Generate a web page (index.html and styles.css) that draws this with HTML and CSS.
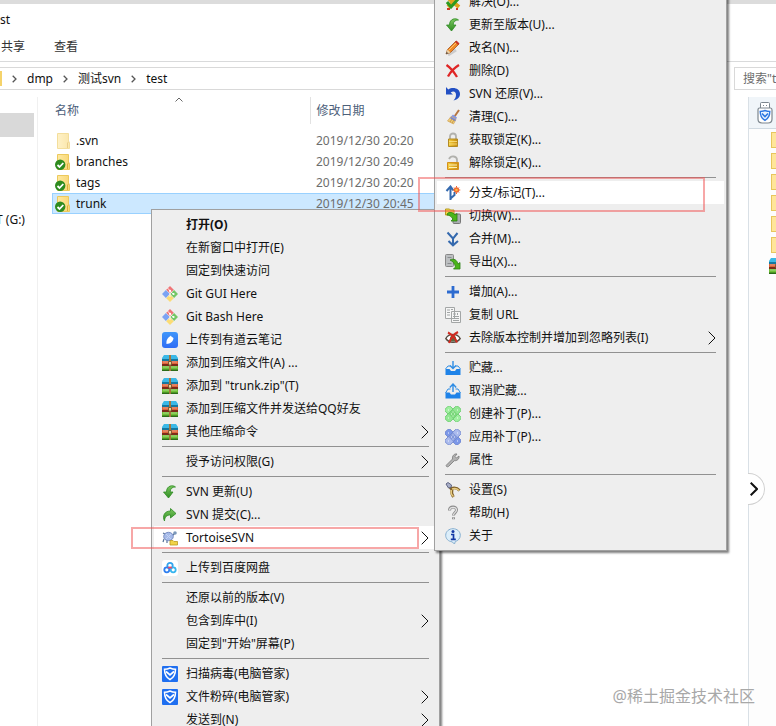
FILE: index.html
```
<!DOCTYPE html>
<html lang="zh-CN">
  <head>
    <meta charset="UTF-8" />
    <meta name="viewport" content="width=device-width, initial-scale=1.0" />
    <title>test</title>
    <link rel="stylesheet" href="styles.css">
  </head>
  <body>
    <svg class="sprite" aria-hidden="true">
      <defs>
        <linearGradient id="gFolder" x1="0" x2="1" y1="0" y2="0">
          <stop offset="0" stop-color="#ffe9a2" />
          <stop offset="1" stop-color="#f8d775" />
        </linearGradient>
        <linearGradient id="gGreen" x1="0" x2="0" y1="0" y2="1">
          <stop offset="0" stop-color="#7cc860" />
          <stop offset="1" stop-color="#2f8d22" />
        </linearGradient>
        <linearGradient id="gGold" x1="0" x2="1" y1="0" y2="0">
          <stop offset="0" stop-color="#f6cf3c" />
          <stop offset="1" stop-color="#c98d10" />
        </linearGradient>
        <linearGradient id="gNote" x1="0" x2="0" y1="0" y2="1">
          <stop offset="0" stop-color="#3f96fa" />
          <stop offset="1" stop-color="#2f6df5" />
        </linearGradient>
      </defs>
      <symbol id="folder" viewBox="0 0 16 16">
        <path d="M2.500.5h11v8l1 1v6h-12z" fill="url(#gFolder)" stroke="#ecc95c" />
        <path d="M12.500 15v-5l1.500-1.500" fill="none" stroke="#dcae3d" />
      </symbol>
      <symbol id="folderOk" viewBox="0 0 16 16">
        <path d="M2.500.5h11v8l1 1v6h-12z" fill="url(#gFolder)" stroke="#ecc95c" />
        <path d="M12.500 15v-5l1.500-1.500" fill="none" stroke="#dcae3d" />
        <circle cx="5.200" cy="10.800" r="5.200" fill="#2e8b1f" />
        <path d="M2.500 11l2 2 3.800-4" fill="none" stroke="#fff" stroke-width="1.800" />
      </symbol>
      <symbol id="git" viewBox="0 0 16 16">
        <path d="M8 0l3.800 3.800L8 7.600 4.200 3.800z" fill="#ef7477" />
        <path d="M3.900 4.100L7.800 8l-3.900 3.900L0 8z" fill="#7ba3f3" />
        <path d="M12.100 4.100L16 8l-3.900 3.900L8.200 8z" fill="#74c765" />
        <path d="M8 8.400l3.800 3.800L8 16l-3.800-3.800z" fill="#fbdc75" />
        <path d="M5.500 2l5.500 6M8 5v6" stroke="#fff" stroke-width=".8" />
        <circle cx="8" cy="4.800" r="1.100" fill="#fff" />
        <circle cx="11.500" cy="8" r="1.100" fill="#fff" />
      </symbol>
      <symbol id="note" viewBox="0 0 16 16">
        <rect width="16" height="16" rx="3" fill="url(#gNote)" />
        <path d="M4.500 12c-.5-4 1-6 4.500-8.500 0 1 1 1.500 2.500 2.500C11 10 8.500 11.500 4.500 12z" fill="#fff" />
      </symbol>
      <symbol id="zip" viewBox="0 0 16 16">
        <path d="M2 0h12l2 3v2H0V3z" fill="#3bb8e6" />
        <path d="M0 4h16v2H0z" fill="#16789f" />
        <path d="M0 6h16v4H0z" fill="#de6338" />
        <path d="M0 9h16v2H0z" fill="#7c2b19" />
        <path d="M0 11h16v4H0z" fill="#6fc037" />
        <path d="M0 14.500h16V16H0z" fill="#2d6c18" />
        <path d="M1 7h14M1 12h14" stroke="#fff" stroke-opacity=".4" />
        <path d="M7 0h2v16H7z" fill="#a5763d" />
        <path d="M6.500 6.500h3V10h-3z" fill="#ead49b" stroke="#6c4420" stroke-width=".8" />
      </symbol>
      <symbol id="update" viewBox="0 0 16 16">
        <path d="M13.500 3C11 .8 4.500 1.200 4.500 8H1.500L6.500 14l4.500-6H8.200c0-3.500 2-5 5.300-5z" fill="url(#gGreen)" stroke="#2c8a22" stroke-width=".8" />
      </symbol>
      <symbol id="commit" viewBox="0 0 16 16">
        <path d="M2.500 14C0 9 2.500 4 8.500 4V1.500L14 6.500 8.500 11V8C5 8 2.800 9.500 2.500 14z" fill="url(#gGreen)" stroke="#2c8a22" stroke-width=".8" />
      </symbol>
      <symbol id="tortoise" viewBox="0 0 16 16">
        <path d="M1 3l4 2M2 9l-1 3M5 10v3M10 6l3-3" stroke="#526f95" stroke-width="1.200" />
        <ellipse cx="6.500" cy="6.500" rx="4.800" ry="4.200" fill="#a5bae8" stroke="#7c8fc4" />
        <path d="M4 4l5 5M9 4L4 9" stroke="#c4d2f5" />
        <circle cx="13" cy="3" r="1.800" fill="#7c98ba" />
        <path d="M8 10.500h3l1 1h3.500V15H8z" fill="#f1d348" stroke="#bb9920" stroke-width=".8" />
      </symbol>
      <symbol id="baidu" viewBox="0 0 16 16">
        <rect width="16" height="16" rx="3" fill="#fff" />
        <g fill="none" stroke-width="1.800">
          <circle cx="8" cy="5.500" r="2.700" stroke="#33a4ee" />
          <circle cx="4.800" cy="9.800" r="2.500" stroke="#2f7ff0" />
          <circle cx="11.200" cy="9.800" r="2.500" stroke="#37b5ef" />
        </g>
        <path d="M6.300 8.200c.8-1 2.600-1 3.400 0" fill="none" stroke="#ee4a66" stroke-width="1.800" />
      </symbol>
      <symbol id="guard" viewBox="0 0 16 16">
        <rect width="16" height="16" rx="1" fill="#1f6ff0" />
        <path d="M8 2c2 1 3.500 1.300 5.500 1.300 0 5-1.500 8.200-5.500 10.400C4 11.500 2.500 8.300 2.500 3.300 4.500 3.300 6 3 8 2z" fill="none" stroke="#fff" stroke-width="1.500" />
        <path d="M4 5.500l4 3.300 4-3.300" fill="none" stroke="#fff" stroke-width="1.700" />
      </symbol>
      <symbol id="resolve" viewBox="0 0 16 16">
        <path d="M2 3l12 10M13 3L3 13" stroke="#e0a41c" stroke-width="4" />
        <path d="M2 8l4 5 8-9" fill="none" stroke="#2c9a20" stroke-width="3" />
        <path d="M2 15h3M11 15h2" stroke="#d13a22" stroke-width="2" />
      </symbol>
      <symbol id="rename" viewBox="0 0 16 16">
        <path d="M3 15l8-5" stroke="#aaa" stroke-opacity=".5" stroke-width="3" />
        <path d="M1 14l1.500-4.500L11 1l3 3-8.500 8.500z" fill="#ef8a26" stroke="#a3541f" stroke-width=".8" />
        <path d="M4 10l8-8" stroke="#ffc36b" />
        <path d="M1 14l1.500-4.500L5.500 12.500z" fill="#ead0a4" />
        <path d="M1 14l.8-2 1.200 1.200z" fill="#222" />
        <path d="M10 2l1.500-1.500 3 3L13 5z" fill="#c63429" />
      </symbol>
      <symbol id="delete" viewBox="0 0 16 16">
        <path d="M1.500 2C6 5 9 9 12 14M14 2C9 5 6 8 3 13.500" fill="none" stroke="#df2626" stroke-width="2.300" />
      </symbol>
      <symbol id="revert" viewBox="0 0 16 16">
        <path d="M1 1v7.500h7L5.600 6.400C9 4.500 11 6 11 9c0 2-1 4-2.500 5.500C13 13.500 15 11 15 8 15 2.500 8 .5 3.300 3.500z" fill="#2350c4" />
      </symbol>
      <symbol id="clean" viewBox="0 0 16 16">
        <path d="M14 1L9.500 7.500" stroke="#b77742" stroke-width="2" />
        <path d="M8 5.500l4 3-1 2-5-3z" fill="#8999e0" />
        <path d="M6 7.500l5 3-2.500 4.500-6-3z" fill="#f0cb79" stroke="#c99a48" stroke-width=".6" />
        <path d="M5.500 8.500l5 3" stroke="#7384d5" stroke-width="1.500" />
        <path d="M5 13l2-3M7 14l2-3" stroke="#b48635" stroke-width=".7" />
      </symbol>
      <symbol id="lock" viewBox="0 0 16 16">
        <path d="M5 8V4.500C5 .5 11 .5 11 4.500V8" fill="none" stroke="#b1b1ad" stroke-width="1.800" />
        <path d="M3.500 7h9v7.500h-9z" fill="url(#gGold)" stroke="#b28a24" />
        <path d="M4 9.500h8M4 12h8" stroke="#fbe48a" stroke-width=".8" />
      </symbol>
      <symbol id="unlock" viewBox="0 0 16 16">
        <path d="M4 4C6 0 12 1 12 5v3" fill="none" stroke="#b1b1ad" stroke-width="1.800" />
        <path d="M2.500 7.500h11v7h-11z" fill="url(#gGold)" stroke="#d5911d" />
        <path d="M4 10h8M4 12.500h8" stroke="#fff0b8" stroke-width="1.200" />
      </symbol>
      <symbol id="branch" viewBox="0 0 16 16">
        <path d="M5.500 15V2.500M1.500 6l4-4.500 3 4M5.500 13.500L9.500 10V7" fill="none" stroke="#3469ae" stroke-width="2" />
        <circle cx="11.500" cy="5" r="2" fill="#ffbc42" stroke="#ef6630" stroke-width="1.300" />
        <path d="M11.500 1v1.500M11.500 7.500V9M7.800 5h1.500M13.800 5h1.500M9 2.500l1 1M14 2.500l-1 1M14 7.500l-1-1" stroke="#ef6630" />
      </symbol>
      <symbol id="switch" viewBox="0 0 16 16">
        <rect x="8" y="6" width="7.500" height="9.500" rx="1" fill="#a9adb0" stroke="#777" />
        <path d="M.5 1h4l1 1H9v5H.5z" fill="#f3d749" stroke="#b79b1f" />
        <path d="M2 7c0-3 5-4 8 0l2-1.500V13H6l2-2C6 8 4 7 2 7z" fill="#4bb519" stroke="#297d13" stroke-width=".8" />
      </symbol>
      <symbol id="merge" viewBox="0 0 16 16">
        <path d="M2.500 1.500L8 7.500M12.500 2L8 7.500V14M3.500 10L8 14.300l5-4.300" fill="none" stroke="#3469ae" stroke-width="2" />
      </symbol>
      <symbol id="export" viewBox="0 0 16 16">
        <rect x=".5" y=".5" width="8" height="12" rx="1" fill="#bcbfc1" stroke="#888" />
        <path d="M2.500 3.500h4M2.500 9.500h4" stroke="#8a8d90" />
        <path d="M5 6c4-2 7 0 8 4l2-1.500V15H8.500l2-2C9.500 9 8 7.500 5 6z" fill="#4bb519" stroke="#297d13" stroke-width=".8" />
      </symbol>
      <symbol id="add" viewBox="0 0 16 16">
        <path d="M8 2v12M2 8h12" stroke="#2d6bd0" stroke-width="2.800" />
      </symbol>
      <symbol id="copy" viewBox="0 0 16 16">
        <path d="M.5.5h9v11h-9zM6.500 4.500h9v11h-9z" fill="#f6f6f6" stroke="#a3a6a6" />
        <path d="M2 3h3M2 5.500h3M2 8h3M6 2.500h2M8 9.500h6M8 11.500h6M8 13.500h6M8 7h3M12.500 6v2" stroke="#a0a4a4" />
      </symbol>
      <symbol id="ignore" viewBox="0 0 16 16">
        <path d="M.8 8.500C4 3 12 3 15.200 8.500 12 13.500 4 13.500.8 8.500z" fill="#fff" stroke="#57493f" stroke-width="1.400" />
        <circle cx="8" cy="8.500" r="3" fill="#5b6b42" />
        <path d="M3 2.500c4 2 7 5 9 10M13 2C9 4 6 8 4 13" fill="none" stroke="#d02a20" stroke-width="2" />
      </symbol>
      <symbol id="stash" viewBox="0 0 16 16">
        <path d="M.5 9L3 6h2.500M15.500 9L13 6h-2.500" fill="none" stroke="#2f8de4" />
        <path d="M.5 9h4l1.500 2h4l1.500-2h4v6H.5z" fill="#1f83e8" />
        <path d="M8 1v7M5 5.500L8 8.500l3-3" fill="none" stroke="#2f8de4" stroke-width="1.400" />
      </symbol>
      <symbol id="unstash" viewBox="0 0 16 16">
        <path d="M.5 10L3 6h2.500M15.500 10L13 6h-2.500" fill="none" stroke="#2f8de4" />
        <path d="M.5 9.500h4l1.500 2h4l1.500-2h4v6H.5z" fill="#1f83e8" />
        <path d="M8 9V1.500M4.800 4.500L8 1l3.200 3.500" fill="none" stroke="#2f8de4" stroke-width="1.400" />
      </symbol>
      <symbol id="patchNew" viewBox="0 0 16 16">
        <g stroke="#66c76a" stroke-width=".8">
          <rect x="-1" y="4.500" width="18" height="7" rx="1.500" fill="#a0efa0" transform="rotate(45 8 8)" />
          <rect x="-1" y="4.500" width="18" height="7" rx="1.500" fill="#93e793" transform="rotate(-45 8 8)" />
        </g>
        <path d="M8 3.500L12.500 8 8 12.500 3.500 8z" fill="#7bd87b" />
        <path d="M6 8h1M9 8h1M7.500 6h1M7.500 10h1M3 4h1M12 4h1M3 12h1M12 12h1" stroke="#effff0" />
      </symbol>
      <symbol id="patchApply" viewBox="0 0 16 16">
        <g stroke="#6b82c9" stroke-width=".8">
          <rect x="-1" y="4.500" width="18" height="7" rx="1.500" fill="#7c98e8" transform="rotate(45 8 8)" />
          <rect x="-1" y="4.500" width="18" height="7" rx="1.500" fill="#abbbed" transform="rotate(-45 8 8)" />
        </g>
        <path d="M8 3.500L12.500 8 8 12.500 3.500 8z" fill="#8298dc" />
        <path d="M6 8h1M9 8h1M7.500 6h1M7.500 10h1M3 4h1M12 4h1M3 12h1M12 12h1" stroke="#f0f3ff" />
      </symbol>
      <symbol id="wrench" viewBox="0 0 16 16">
        <path d="M1.500 13l6-6C7 4 9 1.500 12 2l-2 2.500 1.500 1.500L14 4c.5 3-2 5-4.700 4.700L3.500 14.500c-1.500 1-3-.5-2-1.500z" fill="#b1b1b1" stroke="#808080" stroke-width=".9" />
      </symbol>
      <symbol id="settings" viewBox="0 0 16 16">
        <path d="M4 4l3 4c-1 3 0 5 1.500 7M6 6.500c3-1 6-1 8.500 2" fill="none" stroke="#806129" stroke-width="2.800" />
        <path d="M6.500 8c-1 3 0 5 2 6.500M7 7c3-1 5-.5 7 1.500" fill="none" stroke="#e8cc80" stroke-width="1.500" />
        <path d="M1 2l2-1.500L6.500 3 6 5.500 3.500 6z" fill="#a9afc8" stroke="#5d6482" />
      </symbol>
      <symbol id="help" viewBox="0 0 16 16">
        <path d="M4.500 5.500C4.500 .8 11.500 1 11.500 5c0 2.500-3 2.700-3 5.500M8.500 12.300v2" fill="none" stroke="#8d8d8d" stroke-width="3" />
        <path d="M4.500 5.200C5 1.500 11.200 1.500 11.500 5c0 2.500-3 2.700-3 5M8.500 12.800v1" fill="none" stroke="#e3e3e3" stroke-width="1.200" />
      </symbol>
      <symbol id="about" viewBox="0 0 16 16">
        <path d="M8 .7c4 0 7.300 2.800 7.300 6.600 0 3.200-2.300 5.500-5 6.200L9.500 16 7 13.800C3.500 13.500.7 10.800.7 7.300.7 3.500 4 .7 8 .7z" fill="#dceefa" stroke="#86afd0" />
        <circle cx="8" cy="3.600" r="1.500" fill="#1238a5" />
        <path d="M6 6.500h2.500v5M5.800 11.300h5" fill="none" stroke="#1238a5" stroke-width="1.700" />
      </symbol>
      <symbol id="usb" viewBox="0 0 16 22">
        <path d="M3.500 6.500V1.500q0-1 1-1h7q1 0 1 1v5" fill="#fff" stroke="#7c868e" />
        <path d="M6 3.500h1M9 3.500h1" stroke="#7c868e" />
        <path d="M2.500 6h11q1.500 0 1.500 2v9q0 4-4 4H5q-4 0-4-4V8q0-2 1.500-2z" fill="#fff" stroke="#7c868e" stroke-width="1.200" />
        <path d="M8 8.500c2 .8 3 .9 4.800.9 0 4-1.500 7-4.800 9-3.300-2-4.800-5-4.800-9 1.800 0 2.800-.1 4.800-.9z" fill="#e9f3ff" stroke="#2f78e2" stroke-width="1.400" />
        <path d="M5 11.500l3 3 3-3" fill="none" stroke="#2f78e2" stroke-width="1.600" />
      </symbol>
      <symbol id="arrow" viewBox="0 0 8 14">
        <path d="M.7.7L7 7 .7 13.300" fill="none" stroke="currentColor" />
      </symbol>
      <symbol id="chevron" viewBox="0 0 5 8">
        <path d="M.7.7L4 4 .7 7.300" fill="none" stroke="currentColor" stroke-width="1.300" />
      </symbol>
    </svg>

    <div class="window">
      <header>
        <div class="title">st</div>
        <nav class="tabs">
          <button>共享</button>
          <button>查看</button>
        </nav>
        <div class="toolbar">
          <nav class="path">
            <span class="path-icon"></span>
            <svg class="crumb"><use href="#chevron" /></svg>
            <a href="#">dmp</a>
            <svg class="crumb"><use href="#chevron" /></svg>
            <a href="#">测试svn</a>
            <svg class="crumb"><use href="#chevron" /></svg>
            <a href="#">test</a>
          </nav>
          <input class="search" type="text" aria-label="搜索" placeholder='搜索"test"'>
        </div>
      </header>

      <div class="content">
        <aside class="sidebar">
          <div class="side-selected"></div>
          <a href="#">T (G:)</a>
        </aside>

        <main>
          <table class="files">
            <thead>
              <tr>
                <th class="name">
                  名称
                  <svg class="sort" viewBox="0 0 8 5"><path d="M.5 4.500L4 1l3.500 3.500" fill="none" stroke="#666" /></svg>
                </th>
                <th class="date">修改日期</th>
              </tr>
            </thead>
            <tbody>
              <tr>
                <td><div class="file"><svg class="icon faded"><use href="#folder" /></svg>.svn</div></td>
                <td class="date">2019/12/30 20:20</td>
              </tr>
              <tr>
                <td><div class="file"><svg class="icon"><use href="#folderOk" /></svg>branches</div></td>
                <td class="date">2019/12/30 20:49</td>
              </tr>
              <tr>
                <td><div class="file"><svg class="icon"><use href="#folderOk" /></svg>tags</div></td>
                <td class="date">2019/12/30 20:20</td>
              </tr>
              <tr class="selected">
                <td><div class="file"><svg class="icon"><use href="#folderOk" /></svg>trunk</div></td>
                <td class="date">2019/12/30 20:45</td>
              </tr>
            </tbody>
          </table>
        </main>

        <aside class="panel">
          <div class="panel-head"><svg class="usb"><use href="#usb" /></svg></div>
          <div class="panel-list">
            <span class="mini"></span>
            <span class="mini"></span>
            <span class="mini"></span>
            <span class="mini"></span>
            <span class="mini"></span>
            <span class="mini"></span>
            <svg class="icon"><use href="#zip" /></svg>
          </div>
          <button class="expand" aria-label="展开"><svg class="arrow"><use href="#arrow" /></svg></button>
        </aside>
      </div>
    </div>

    <ul class="menu main-menu">
      <li><button class="bold"><span class="icon"></span>打开(O)</button></li>
      <li><button><span class="icon"></span>在新窗口中打开(E)</button></li>
      <li><button><span class="icon"></span>固定到快速访问</button></li>
      <li><button><svg class="icon"><use href="#git" /></svg>Git GUI Here</button></li>
      <li><button><svg class="icon"><use href="#git" /></svg>Git Bash Here</button></li>
      <li><button><svg class="icon"><use href="#note" /></svg>上传到有道云笔记</button></li>
      <li><button><svg class="icon"><use href="#zip" /></svg>添加到压缩文件(A) ...</button></li>
      <li><button><svg class="icon"><use href="#zip" /></svg>添加到 "trunk.zip"(T)</button></li>
      <li><button><svg class="icon"><use href="#zip" /></svg>添加到压缩文件并发送给QQ好友</button></li>
      <li><button><svg class="icon"><use href="#zip" /></svg>其他压缩命令<svg class="arrow"><use href="#arrow" /></svg></button></li>
      <li class="sep"></li>
      <li><button><span class="icon"></span>授予访问权限(G)<svg class="arrow"><use href="#arrow" /></svg></button></li>
      <li class="sep"></li>
      <li><button><svg class="icon"><use href="#update" /></svg>SVN 更新(U)</button></li>
      <li><button><svg class="icon"><use href="#commit" /></svg>SVN 提交(C)...</button></li>
      <li><button class="active"><svg class="icon"><use href="#tortoise" /></svg>TortoiseSVN<svg class="arrow"><use href="#arrow" /></svg></button></li>
      <li class="sep"></li>
      <li><button><svg class="icon"><use href="#baidu" /></svg>上传到百度网盘</button></li>
      <li class="sep"></li>
      <li><button><span class="icon"></span>还原以前的版本(V)</button></li>
      <li><button><span class="icon"></span>包含到库中(I)<svg class="arrow"><use href="#arrow" /></svg></button></li>
      <li><button><span class="icon"></span>固定到"开始"屏幕(P)</button></li>
      <li class="sep"></li>
      <li><button><svg class="icon"><use href="#guard" /></svg>扫描病毒(电脑管家)</button></li>
      <li><button><svg class="icon"><use href="#guard" /></svg>文件粉碎(电脑管家)<svg class="arrow"><use href="#arrow" /></svg></button></li>
      <li><button><span class="icon"></span>发送到(N)<svg class="arrow"><use href="#arrow" /></svg></button></li>
    </ul>

    <ul class="menu sub-menu">
      <li><button><svg class="icon"><use href="#resolve" /></svg>解决(O)...</button></li>
      <li><button><svg class="icon"><use href="#update" /></svg>更新至版本(U)...</button></li>
      <li><button><svg class="icon"><use href="#rename" /></svg>改名(N)...</button></li>
      <li><button><svg class="icon"><use href="#delete" /></svg>删除(D)</button></li>
      <li><button><svg class="icon"><use href="#revert" /></svg>SVN 还原(V)...</button></li>
      <li><button><svg class="icon"><use href="#clean" /></svg>清理(C)...</button></li>
      <li><button><svg class="icon"><use href="#lock" /></svg>获取锁定(K)...</button></li>
      <li><button><svg class="icon"><use href="#unlock" /></svg>解除锁定(K)...</button></li>
      <li class="sep"></li>
      <li><button class="active"><svg class="icon"><use href="#branch" /></svg>分支/标记(T)...</button></li>
      <li><button><svg class="icon"><use href="#switch" /></svg>切换(W)...</button></li>
      <li><button><svg class="icon"><use href="#merge" /></svg>合并(M)...</button></li>
      <li><button><svg class="icon"><use href="#export" /></svg>导出(X)...</button></li>
      <li class="sep"></li>
      <li><button><svg class="icon"><use href="#add" /></svg>增加(A)...</button></li>
      <li><button><svg class="icon"><use href="#copy" /></svg>复制 URL</button></li>
      <li><button><svg class="icon"><use href="#ignore" /></svg>去除版本控制并增加到忽略列表(I)<svg class="arrow"><use href="#arrow" /></svg></button></li>
      <li class="sep"></li>
      <li><button><svg class="icon"><use href="#stash" /></svg>贮藏...</button></li>
      <li><button><svg class="icon"><use href="#unstash" /></svg>取消贮藏...</button></li>
      <li><button><svg class="icon"><use href="#patchNew" /></svg>创建补丁(P)...</button></li>
      <li><button><svg class="icon"><use href="#patchApply" /></svg>应用补丁(P)...</button></li>
      <li><button><svg class="icon"><use href="#wrench" /></svg>属性</button></li>
      <li class="sep"></li>
      <li><button><svg class="icon"><use href="#settings" /></svg>设置(S)</button></li>
      <li><button><svg class="icon"><use href="#help" /></svg>帮助(H)</button></li>
      <li><button><svg class="icon"><use href="#about" /></svg>关于</button></li>
    </ul>

    <div class="mark mark-tortoise"></div>
    <div class="mark mark-branch"></div>
    <div class="watermark">@稀土掘金技术社区</div>
  </body>
</html>
```
FILE: styles.css
```
* {
  box-sizing: border-box;
}
body {
  position: relative;
  margin: 0;
  height: 100vh;
  overflow: hidden;
  background: #fff;
  color: #111;
  font-family: "Noto Sans", "Noto Sans CJK SC", sans-serif;
  font-size: 12px;
  line-height: 20px;
}
button,
input {
  font: inherit;
  color: inherit;
  border: none;
  background: none;
  padding: 0;
}
a {
  color: inherit;
  text-decoration: none;
}
.sprite {
  position: absolute;
  width: 0;
  height: 0;
}
.icon {
  flex: none;
  width: 16px;
  height: 16px;
}
.arrow {
  flex: none;
  width: 8px;
  height: 14px;
}

/* explorer window */
.window {
  display: flex;
  flex-direction: column;
  height: 100%;
  border-top: 4px solid #dcdcdc;
}
.title {
  padding: 6px 0 7px;
}
.tabs {
  display: flex;
  gap: 28px;
  padding-bottom: 4px;
  border-bottom: 1px solid #d9dadb;
  color: #333;
}
.tabs button {
  padding-left: 1px;
}
.toolbar {
  display: flex;
  gap: 12px;
  margin-top: 5px;
}
.path {
  flex: 1;
  display: flex;
  align-items: center;
  gap: 10px;
  height: 23px;
  border: 1px solid #d9d9d9;
  border-left: none;
}
.path-icon {
  width: 2px;
  height: 15px;
  background: #f5d36b;
}
.crumb {
  width: 5px;
  height: 8px;
  color: #555;
}
.search {
  width: 42px;
  height: 23px;
  padding-left: 8px;
  border: 1px solid #d9d9d9;
  border-right: none;
}
.search::placeholder {
  color: #6d6d6d;
  opacity: 1;
}
.content {
  flex: 1;
  display: flex;
  padding-top: 7px;
}
.sidebar {
  width: 38px;
  padding-top: 16px;
  border-right: 1px solid #f0f0f0;
  white-space: nowrap;
}
.sidebar a {
  display: block;
  margin-top: 73px;
  margin-left: -4px;
}
.side-selected {
  width: 34px;
  height: 24px;
  background: #d9d9d9;
}
main {
  flex: 1;
  padding: 0 32px 0 14px;
}
.files {
  width: 100%;
  border-collapse: collapse;
  table-layout: fixed;
}
.files th {
  height: 27px;
  padding: 0 0 0 3px;
  color: #4c607a;
  font-weight: normal;
  text-align: left;
}
.files th.name {
  position: relative;
  width: 258px;
  border-right: 1px solid #e2e2e2;
}
.sort {
  position: absolute;
  top: 0;
  left: 50%;
  width: 8px;
  height: 5px;
  margin-left: -6px;
}
.files tbody::before {
  content: "";
  display: block;
  height: 6px;
}
.files td {
  height: 21px;
  padding: 0;
}
.files .date {
  padding-left: 6px;
}
.files td.date {
  color: #6d6d6d;
}
.file {
  display: flex;
  align-items: center;
  gap: 5px;
  padding-left: 3px;
}
.faded {
  opacity: 0.6;
}
.selected {
  background: #cce8ff;
  outline: 1px solid #99d1ff;
  outline-offset: -1px;
}
.panel {
  position: relative;
  width: 28px;
  border-left: 1px solid #d9e0e6;
  background: #fdfdfd;
}
.panel-head {
  height: 32px;
  padding: 5px 0 0 8px;
  overflow: hidden;
  border-bottom: 1px solid #d0dae2;
  background: #f0f5f9;
}
.usb {
  display: block;
  width: 16px;
  height: 22px;
}
.panel-list {
  display: flex;
  flex-direction: column;
  align-items: flex-start;
  gap: 5px;
  padding: 3px 0 0 20px;
  overflow: hidden;
}
.mini {
  width: 8px;
  height: 16px;
  margin-left: 2px;
  border: 1px solid #e8c65d;
  background: #ffe59a;
}
.expand {
  position: absolute;
  top: 376px;
  left: -1px;
  display: flex;
  align-items: center;
  width: 17px;
  height: 32px;
  border: 1px solid #d0d0d0;
  border-left: none;
  border-radius: 0 16px 16px 0;
  background: #fff;
}
.expand .arrow {
  margin-left: 2px;
  stroke-width: 2;
}

/* context menus */
.menu {
  position: absolute;
  margin: 0;
  padding: 3px 0;
  list-style: none;
  border: 1px solid #a0a0a0;
  background: #eee;
  box-shadow: 2px 2px 2px rgba(0, 0, 0, 0.5);
}
.menu button {
  display: flex;
  align-items: center;
  gap: 8px;
  width: calc(100% - 4px);
  height: 23px;
  margin: 0 2px;
  padding: 0 8px;
  white-space: nowrap;
}
.menu button.active,
.menu button:hover {
  background: #fff;
}
.menu .bold {
  font-weight: bold;
}
.menu .arrow {
  margin-left: auto;
}
.sep {
  height: 7px;
  margin: 0 10px;
  padding-top: 3px;
}
.sep::before {
  content: "";
  display: block;
  height: 1px;
  background: #919191;
}
.main-menu {
  top: 209px;
  left: 151px;
  width: 289px;
}
.sub-menu {
  top: -14px;
  left: 434px;
  width: 293px;
}

/* highlighted steps */
.mark {
  position: absolute;
  border: 2px solid rgba(240, 80, 80, 0.5);
  pointer-events: none;
}
.mark-tortoise {
  top: 527px;
  left: 131px;
  width: 288px;
  height: 22px;
}
.mark-branch {
  top: 177px;
  left: 418px;
  width: 287px;
  height: 35px;
}
.watermark {
  position: absolute;
  right: 21px;
  bottom: 18px;
  color: #a8a8a8;
  font-size: 16px;
  line-height: 24px;
}
```
